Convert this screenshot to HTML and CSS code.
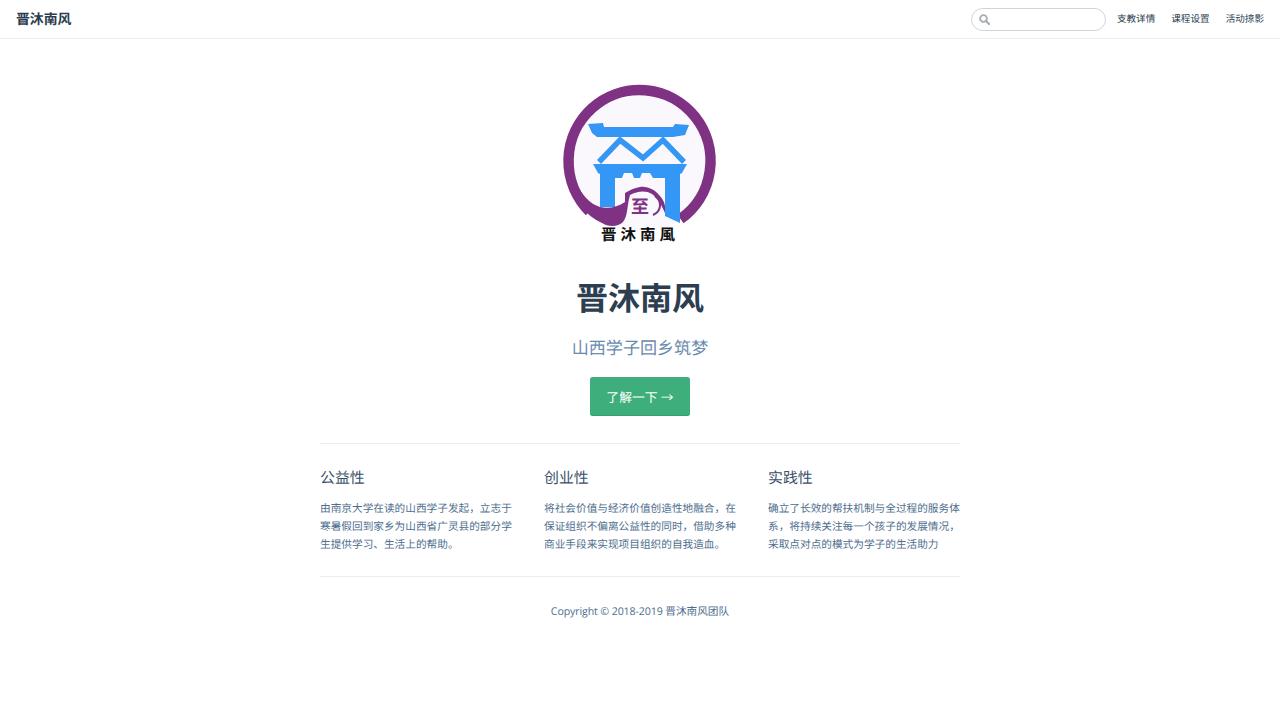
FILE: index.html
```html
<!DOCTYPE html>
<html lang="zh-CN">
<head>
    <meta charset="UTF-8">
    <meta name="viewport" content="width=device-width, initial-scale=1.0">
    <title>晋沐南风</title>
    <link rel="stylesheet" href="styles.css">
</head>
<body>
    <header class="navbar">
        <a class="site-name" href="#">晋沐南风</a>
        <div class="nav-right">
            <div class="search-box">
                <svg class="search-icon" viewBox="0 0 12 12" width="11" height="11">
                    <circle cx="4.9" cy="4.9" r="3.7" fill="none" stroke="#a6adb5" stroke-width="2"/>
                    <path d="M7.6 7.6 L11 11" stroke="#a6adb5" stroke-width="2.3" stroke-linecap="round"/>
                </svg>
                <input type="text" aria-label="Search">
            </div>
            <nav class="nav-links">
                <a href="#">支教详情</a>
                <a href="#">课程设置</a>
                <a href="#">活动掠影</a>
            </nav>
        </div>
    </header>

    <main class="home">
        <div class="hero">
            <svg class="logo" viewBox="0 0 200 188" width="200" height="188">
                <circle cx="99.5" cy="91" r="71" fill="#fbf8fd"/>
                <path d="M49.5 141.4 A71 71 0 1 1 140.5 149" fill="none" stroke="#7f3283" stroke-width="10.5"/>
                <!-- gate -->
                <path d="M48 54 L63 53 L64 57 L133 57 L135 54 L149 55 L145 65 L133 67 L57 67 L52 63 Z" fill="#3597f5"/>
                <path d="M59 92 L80 70 L103 88 L123 70 L144 92" fill="none" stroke="#3597f5" stroke-width="5.5"/>
                <path d="M53 94 L147 94 L142 103 L140 104 L140 153 L125 146 L125 108 L113 108 L110 103 L102 103 L100 108 L94 108 L92 103 L84 103 L82 108 L75 108 L75 137 L60 137 L60 104 L58 103 Z" fill="#3597f5"/>
                <!-- swoosh and cloud -->
                <path d="M27 112 L35 112 C42 125 50 134 60 137 C68 139 78 137 85 132 L85 123 C90 120 94 118 100 117 C108 116 115 120 119 125 C122 128 124 131 125 136 L125 143 C122 136 118 128 112 124 C106 120 97 121 90 125 C87 135 88 146 83 152 C78 157 68 157 62 153 C46 146 34 130 27 112 Z" fill="#7f3283"/>
                <text class="logo-small" x="100" y="143">至</text>
                <path d="M115 126 C122 131 122 141 113 145" fill="none" stroke="#7f3283" stroke-width="2"/>
                <text class="logo-name" x="100" y="170">晋沐南風</text>
            </svg>
            <h1>晋沐南风</h1>
            <p class="description">山西学子回乡筑梦</p>
            <p class="action"><a class="action-button" href="#">了解一下 →</a></p>
        </div>
        <div class="features">
            <div class="feature">
                <h2>公益性</h2>
                <p>由南京大学在读的山西学子发起，立志于寒暑假回到家乡为山西省广灵县的部分学生提供学习、生活上的帮助。</p>
            </div>
            <div class="feature">
                <h2>创业性</h2>
                <p>将社会价值与经济价值创造性地融合，在保证组织不偏离公益性的同时，借助多种商业手段来实现项目组织的自我造血。</p>
            </div>
            <div class="feature">
                <h2>实践性</h2>
                <p>确立了长效的帮扶机制与全过程的服务体系，将持续关注每一个孩子的发展情况，采取点对点的模式为学子的生活助力</p>
            </div>
        </div>
        <footer class="footer"><span class="copyright">Copyright © 2018-2019 </span>晋沐南风团队</footer>
    </main>
</body>
</html>
```

FILE: styles.css
```css
body {
    margin: 0;
    font-family: "Open Sans", "Noto Sans CJK SC", sans-serif;
    font-size: 10.67px;
    line-height: 1.7;
    color: #2c3e50;
    background: #fff;
    text-rendering: geometricPrecision;
}

a {
    text-decoration: none;
}

.navbar {
    height: 38px;
    padding: 0 16px;
    display: flex;
    justify-content: space-between;
    align-items: center;
    border-bottom: 1px solid #eaecef;
}

.site-name {
    padding-top: 2px;
    font-size: 13.87px;
    font-weight: 700;
    color: #2c3e50;
}

.nav-right {
    display: flex;
    align-items: center;
}

.search-box {
    position: relative;
    margin-right: 11px;
    display: flex;
}

.search-icon {
    position: absolute;
    left: 8px;
    top: 6px;
}

.search-box input {
    width: 135px;
    height: 23px;
    padding: 0;
    box-sizing: border-box;
    border: 1px solid #cfd4db;
    border-radius: 12px;
    background: #fff;
    outline: none;
}

.nav-links {
    padding-top: 1px;
    display: flex;
    gap: 16px;
}

.nav-links a {
    font-size: 9.6px;
    color: #2c3e50;
}

.home {
    width: 640px;
    margin: 0 auto;
}

.hero {
    text-align: center;
}

.logo {
    display: block;
    margin: 31px auto 0;
}

.logo-small {
    font-family: "Noto Sans CJK SC", sans-serif;
    font-size: 18px;
    font-weight: 700;
    fill: #7f3283;
    text-anchor: middle;
}

.logo-name {
    font-family: "Noto Sans CJK SC", sans-serif;
    font-size: 15.5px;
    font-weight: 700;
    letter-spacing: 4px;
    fill: #111;
    text-anchor: middle;
}

h1 {
    margin: 21px 0 19px;
    font-size: 32px;
    line-height: 1.25;
    font-weight: 700;
}

.description {
    margin: 19px 0 17px;
    font-size: 17.07px;
    line-height: 1.3;
    color: #6a8bad;
}

.action {
    margin: 17px 0 0;
}

.action-button {
    display: inline-block;
    padding: 9.5px 16.5px 6.5px;
    font-size: 12.8px;
    color: #fff;
    background: #3eaf7c;
    border-bottom: 1px solid #389d70;
    border-radius: 2.67px;
}

.features {
    margin-top: 26.67px;
    padding: 12.8px 0;
    border-top: 1px solid #eaecef;
    display: flex;
    justify-content: space-between;
}

.feature {
    width: 192px;
}

.feature h2 {
    margin: 12.4px 0 12.7px;
    font-size: 14.93px;
    line-height: 1.25;
    font-weight: 400;
    color: #3a5169;
}

.feature p {
    margin: 0 0 8.67px;
    color: #4e6e8e;
}

.footer {
    padding: 25.5px 0 24px;
    border-top: 1px solid #eaecef;
    text-align: center;
    color: #4e6e8e;
}

.copyright {
    letter-spacing: -0.14px;
}
```
